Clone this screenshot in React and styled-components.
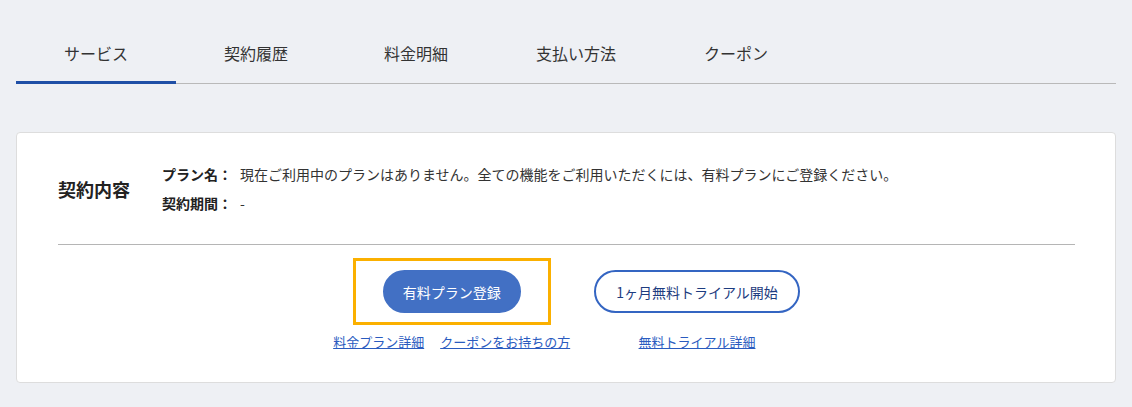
import styled, { createGlobalStyle } from 'styled-components';

const GlobalStyle = createGlobalStyle`
  body {
    margin: 0;
    background: #eef0f4;
    font-family: "Noto Sans CJK JP", "Noto Sans", sans-serif;
    color: #333;
  }
`;

const Page = styled.div`
  padding: 21px 16px 0;
`;

const TabBar = styled.nav`
  display: flex;
  border-bottom: 1px solid #b9b9b9;
`;

const Tab = styled.div`
  width: 160px;
  height: 63px;
  box-sizing: border-box;
  padding-top: 4px;
  margin-bottom: -1px;
  display: flex;
  align-items: center;
  justify-content: center;
  font-size: 16px;
  color: #333;
  border-bottom: 3px solid ${(p) => (p.active ? '#1f4fa6' : 'transparent')};
  cursor: pointer;
`;

const Card = styled.section`
  margin-top: 48px;
  background: #fff;
  border: 1px solid #dddddd;
  border-radius: 4px;
  padding: 27px 40px 30px 41px;
`;

const Summary = styled.div`
  display: flex;
  align-items: center;
`;

const Heading = styled.h2`
  width: 104px;
  margin: 0;
  font-size: 18px;
  font-weight: 700;
  color: #222;
`;

const InfoList = styled.dl`
  margin: 0;
`;

const InfoRow = styled.div`
  display: flex;
  line-height: 29px;
  font-size: 14px;
`;

const Label = styled.dt`
  width: 78px;
  font-weight: 700;
  color: #222;
`;

const Value = styled.dd`
  margin: 0;
  color: #333;
`;

const Divider = styled.hr`
  margin: 26px 0 0;
  border: none;
  border-top: 1px solid #b5b5b5;
`;

const Actions = styled.div`
  display: flex;
  justify-content: center;
  gap: 21px;
  margin-top: 13px;
  padding-left: 3px;
`;

const ActionGroup = styled.div`
  display: flex;
  flex-direction: column;
  align-items: center;
`;

const ButtonFrame = styled.div`
  border: 3px solid ${(p) => (p.highlighted ? '#fbb000' : 'transparent')};
  padding: ${(p) => (p.highlighted ? '9px 27px' : '9px 0')};
`;

const PillButton = styled.button`
  height: 43px;
  box-sizing: border-box;
  border-radius: 22px;
  font-family: inherit;
  font-size: 14px;
  cursor: pointer;
  padding: ${(p) => (p.outline ? '0 20px' : '0 18px')};
  background: ${(p) => (p.outline ? '#fff' : '#4270c4')};
  color: ${(p) => (p.outline ? '#1d3c80' : '#fff')};
  border: 2px solid ${(p) => (p.outline ? '#3465c2' : '#4270c4')};
`;

const LinkRow = styled.div`
  display: flex;
  gap: 16px;
  margin-top: 7px;
`;

const TextLink = styled.a`
  font-size: 13px;
  line-height: 20px;
  color: #2a5bbf;
  text-decoration: underline;
  cursor: pointer;
`;

const tabs = ['サービス', '契約履歴', '料金明細', '支払い方法', 'クーポン'];

export default function App() {
  return (
    <>
      <GlobalStyle />
      <Page>
        <TabBar>
          {tabs.map((t, i) => (
            <Tab key={t} active={i === 0}>
              {t}
            </Tab>
          ))}
        </TabBar>

        <Card>
          <Summary>
            <Heading>契約内容</Heading>
            <InfoList>
              <InfoRow>
                <Label>プラン名：</Label>
                <Value>
                  現在ご利用中のプランはありません。全ての機能をご利用いただくには、有料プランにご登録ください。
                </Value>
              </InfoRow>
              <InfoRow>
                <Label>契約期間：</Label>
                <Value>-</Value>
              </InfoRow>
            </InfoList>
          </Summary>

          <Divider />

          <Actions>
            <ActionGroup>
              <ButtonFrame highlighted>
                <PillButton>有料プラン登録</PillButton>
              </ButtonFrame>
              <LinkRow>
                <TextLink>料金プラン詳細</TextLink>
                <TextLink>クーポンをお持ちの方</TextLink>
              </LinkRow>
            </ActionGroup>
            <ActionGroup>
              <ButtonFrame>
                <PillButton outline>1ヶ月無料トライアル開始</PillButton>
              </ButtonFrame>
              <LinkRow>
                <TextLink>無料トライアル詳細</TextLink>
              </LinkRow>
            </ActionGroup>
          </Actions>
        </Card>
      </Page>
    </>
  );
}
